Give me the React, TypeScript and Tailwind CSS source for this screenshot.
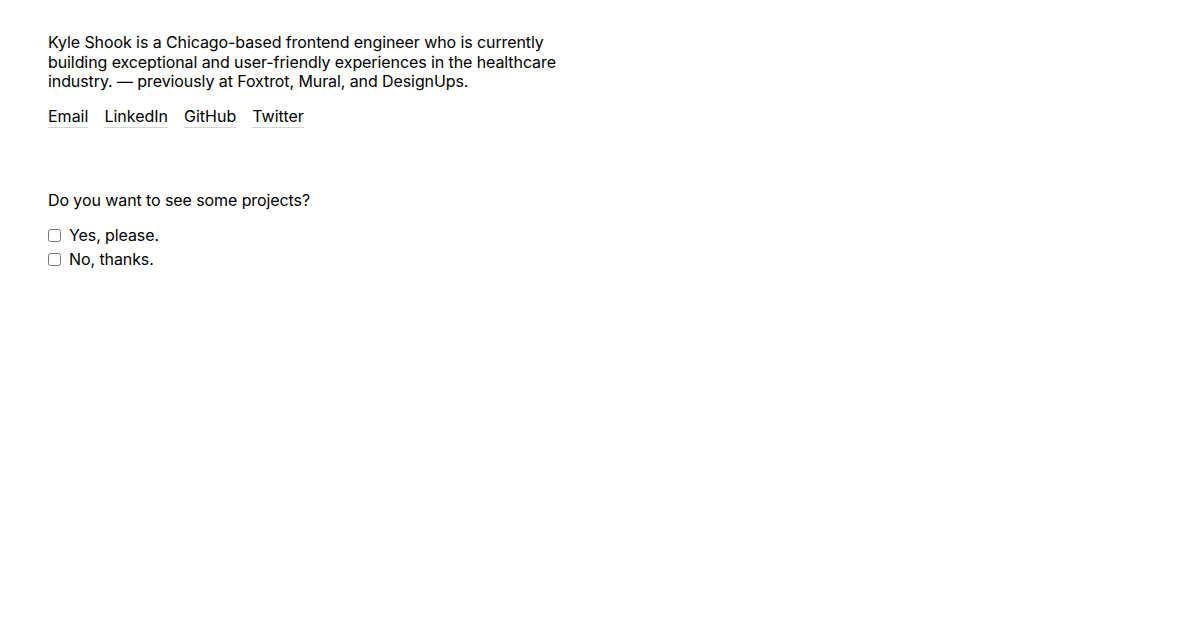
import React from "react";

const links = ["Email", "LinkedIn", "GitHub", "Twitter"];

export default function App() {
  return (
    <main className="min-h-screen bg-white px-12 pt-[33px] text-[16px] leading-[19.5px] tracking-[-0.09px] text-black [font-family:Inter,'Liberation_Sans',sans-serif]">
      <p className="max-w-[516px]">
        Kyle Shook is a Chicago-based frontend engineer who is currently building exceptional and
        user-friendly experiences in the healthcare industry. — previously at Foxtrot, Mural, and
        DesignUps.
      </p>
      <nav className="mt-[15px] flex gap-4 tracking-normal">
        {links.map((l) => (
          <a key={l} href="#" className="border-b border-[#d4d4d4] pb-[1px]">
            {l}
          </a>
        ))}
      </nav>
      <section className="mt-[63px]">
        <p>Do you want to see some projects?</p>
        <div className="mt-[15px] flex flex-col gap-[5px]">
          <label className="flex items-center gap-2">
            <input type="checkbox" className="m-0 h-[13px] w-[13px]" />
            Yes, please.
          </label>
          <label className="flex items-center gap-2">
            <input type="checkbox" className="m-0 h-[13px] w-[13px]" />
            No, thanks.
          </label>
        </div>
      </section>
    </main>
  );
}
